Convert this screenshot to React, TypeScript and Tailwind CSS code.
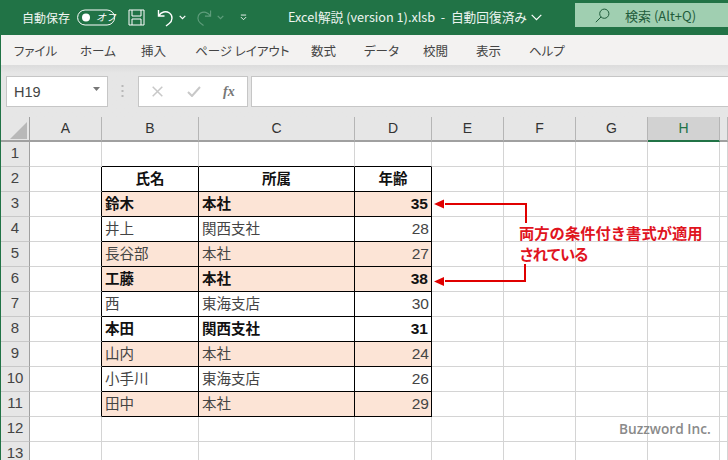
import React from "react";

const FONT = '"Noto Sans CJK JP", "Liberation Sans", sans-serif';
const CELLFONT = '"Liberation Sans", "Noto Sans CJK JP", sans-serif';
const cols = ["A", "B", "C", "D", "E", "F", "G", "H", ""];
type R = [string, string, string, boolean, boolean];
const data: Record<number, R> = {
  3: ["鈴木", "本社", "35", true, true],
  4: ["井上", "関西支社", "28", false, false],
  5: ["長谷部", "本社", "27", false, true],
  6: ["工藤", "本社", "38", true, true],
  7: ["西", "東海支店", "30", false, false],
  8: ["本田", "関西支社", "31", true, false],
  9: ["山内", "本社", "24", false, true],
  10: ["小手川", "東海支店", "26", false, false],
  11: ["田中", "本社", "29", false, true],
};
const menu: [string, string][] = [
  ["ファイル", "w-[38px] ml-[13px]"],
  ["ホーム", "w-[34px] ml-[28px]"],
  ["挿入", "w-[26px] ml-[27px]"],
  ["ページ レイアウト", "w-[86px] ml-[28px]"],
  ["数式", "w-[26px] ml-[30px]"],
  ["データ", "w-[33px] ml-[27px]"],
  ["校閲", "w-[26px] ml-[26px]"],
  ["表示", "w-[26px] ml-[27px]"],
  ["ヘルプ", "w-[33px] ml-[27px]"],
];

function Cell({ r, c }: { r: number; c: number }) {
  const inTable = r >= 2 && r <= 11 && c >= 1 && c <= 3;
  const rightBlack = r >= 2 && r <= 11 && c >= 0 && c <= 3;
  const bottomBlack = r >= 1 && r <= 11 && c >= 1 && c <= 3;
  const d = data[r];
  let text = "";
  let bold = false;
  let fill = false;
  let align = "justify-start pl-[3px]";
  let size = "text-[14.5px]";
  if (r === 2 && inTable) {
    text = ["氏名", "所属", "年齢"][c - 1];
    bold = true;
    align = "justify-center";
  } else if (d && inTable) {
    text = d[c - 1] as string;
    bold = d[3];
    fill = d[4];
    if (c === 3) {
      align = bold ? "justify-end pr-[3px]" : "justify-end pr-[2px]";
      size = "text-[15.5px]";
    }
  }
  return (
    <div
      className={`flex items-center border-r border-b ${rightBlack ? "border-r-black" : "border-r-[#d4d4d4]"} ${bottomBlack ? "border-b-black" : "border-b-[#d4d4d4]"} ${fill ? "bg-[#fce4d6]" : "bg-white"} ${align} ${bold ? "font-bold text-[#111]" : "text-[#444]"} ${size} leading-none`}
      style={{ fontFamily: CELLFONT }}
    >
      {text}
    </div>
  );
}

export default function App() {
  return (
    <div className="relative w-[728px] h-[460px] overflow-hidden bg-white" style={{ fontFamily: FONT }}>
      {/* Title bar */}
      <div className="h-[35px] bg-[#217346] flex items-center text-white text-[12px] leading-none">
        <span className="ml-[22px] w-[48px] text-[#f1f6f3]">自動保存</span>
        <svg className="ml-[7px]" width="39" height="17" viewBox="0 0 39 17" fill="none">
          <rect x="0.6" y="1" width="37" height="15" rx="7.5" stroke="#fff" strokeWidth="1" />
          <circle cx="9" cy="8.500" r="4" fill="#fff" />
        </svg>
        <span className="absolute left-[96px] top-[12px] text-[10px] italic">オフ</span>
        <svg className="ml-[12px]" width="17" height="17" viewBox="0 0 17 17" fill="none" stroke="#fff" strokeWidth="1">
          <path d="M1 1h15v15H1zM4 1v6h9V1M4 16v-6h9v6" />
        </svg>
        <svg className="ml-[12px]" width="17" height="18" viewBox="0 0 17 18" fill="none" stroke="#fff" strokeWidth="1.4">
          <path d="M1.500 1v6h6M1.700 7C4 2.500 9 1.800 12.500 4c3.500 2.500 3.200 8-.3 10.500L9 17" />
        </svg>
        <svg className="ml-[5px]" width="7" height="5" viewBox="0 0 7 5" fill="none" stroke="#fff" strokeWidth="1.2">
          <path d="M.7.8 3.500 3.600 6.300.8" />
        </svg>
        <svg className="ml-[10px]" width="16" height="18" viewBox="0 0 17 18" fill="none" stroke="#5f9d7c" strokeWidth="1.2">
          <path d="M15.500 1v6h-6M15.300 7C13 2.500 8 1.800 4.500 4 1 6.500 1.300 12 4.800 14.500L8 17" />
        </svg>
        <svg className="ml-[5px]" width="7" height="5" viewBox="0 0 7 5" fill="none" stroke="#5f9d7c" strokeWidth="1.2">
          <path d="M.7.8 3.500 3.600 6.300.8" />
        </svg>
        <svg className="ml-[16px]" width="7" height="7" viewBox="0 0 8 7" fill="none" stroke="#fff" strokeWidth="1">
          <path d="M1 .7h6M1 3 4 6l3-3" />
        </svg>
        <span className="ml-[41px] whitespace-nowrap text-[12.7px] text-[#eef5f1]">Excel解説 (version 1).xlsb&nbsp; -&nbsp; 自動回復済み</span>
        <svg className="ml-[4px]" width="11" height="7" viewBox="0 0 11 7" fill="none" stroke="#fff" strokeWidth="1.2">
          <path d="M.7.8 5.500 5.600 10.300.8" />
        </svg>
        <div className="ml-auto w-[153px] h-[24px] mb-[5px] bg-[#a0cfb1] flex items-center text-[#1f5c3b] text-[13px]">
          <svg className="ml-[20px]" width="15" height="15" viewBox="0 0 15 15" fill="none" stroke="#1f5c3b" strokeWidth="1">
            <circle cx="9.300" cy="5.700" r="4.600" />
            <path d="M6 9 .8 14.200" />
          </svg>
          <span className="ml-[15px] whitespace-nowrap">検索 (Alt+Q)</span>
        </div>
      </div>
      <div className="border-l border-l-[#217346]">
        {/* Menu */}
        <div className="h-[30px] bg-[#f3f2f1] flex items-center pt-[2px] text-[12.5px] text-[#444] leading-none">
          {menu.map(([t, cl]) => (
            <span key={t} className={`${cl} whitespace-nowrap [font-feature-settings:"palt"]`}>{t}</span>
          ))}
        </div>
        {/* Formula bar */}
        <div className="h-[52px] bg-[#e6e6e6] bg-gradient-to-b from-[#dcdcdc] to-[#e6e6e6] to-[8px] flex items-start pt-[11px] pl-[5px]">
          <div className="w-[102px] h-[31px] bg-white border border-[#c6c6c6] flex items-center justify-between pl-[7px] pr-[7px] text-[14.5px] text-[#444]" style={{ fontFamily: '"Liberation Sans", sans-serif' }}>
            <span className="pt-[3px]">H19</span>
            <svg className="mb-[5px]" width="7" height="4" viewBox="0 0 7 4"><path d="M0 0h7L3.500 4z" fill="#777" /></svg>
          </div>
          <svg className="ml-[13px] mt-[9px]" width="3" height="12" viewBox="0 0 3 12" fill="#b8b8b8">
            <rect x="0.5" y="0" width="2" height="2" />
            <rect x="0.5" y="5" width="2" height="2" />
            <rect x="0.5" y="10" width="2" height="2" />
          </svg>
          <div className="ml-[14px] w-[110px] h-[31px] bg-white border border-[#c6c6c6] flex items-center">
            <svg className="ml-[13px]" width="11" height="11" viewBox="0 0 11 11" fill="none" stroke="#c8c8c8" strokeWidth="1.5"><path d="M.7.7l9.600 9.600M10.300.7.7 10.300" /></svg>
            <svg className="ml-[24px]" width="14" height="11" viewBox="0 0 14 11" fill="none" stroke="#c8c8c8" strokeWidth="2"><path d="M1 6l4 4 8-9" /></svg>
            <span className="ml-[22px] text-[14px] italic font-bold text-[#777]" style={{ fontFamily: '"Liberation Serif", serif' }}>fx</span>
          </div>
          <div className="ml-[3px] flex-1 h-[31px] bg-white border border-[#c6c6c6] border-r-0" />
        </div>
        {/* Sheet */}
        <div className="grid grid-cols-[29px_72px_97px_156px_77px_72px_72px_72px_72px_1fr] grid-rows-[25px_repeat(13,25px)] bg-white">
          <div className="bg-[#e6e6e6] border-r border-b-2 border-r-[#a0a0a0] border-b-[#a0a0a0] relative h-[25px]">
            <svg className="absolute left-[9px] top-[5px]" width="17" height="17" viewBox="0 0 17 17"><path d="M17 0v17H0z" fill="#b8b8b8" /></svg>
          </div>
          {cols.map((c, i) => (
            <div
              key={i}
              className={`h-[25px] flex items-center justify-center text-[14px] border-r border-b-2 ${c === "H" ? "bg-[#d2d2d2] text-[#217346] border-b-[#217346] border-r-[#b5b5b5]" : "bg-[#e6e6e6] text-[#333] border-b-[#a0a0a0] border-r-[#b5b5b5]"}`}
              style={{ fontFamily: '"Liberation Sans", sans-serif' }}
            >
              {c}
            </div>
          ))}
          {Array.from({ length: 13 }, (_, ri) => ri + 1).map((r) => (
            <React.Fragment key={r}>
              <div className="bg-[#e6e6e6] border-r border-b border-r-[#a0a0a0] border-b-[#c8c8c8] flex items-center justify-center pb-px text-[15px] text-[#444]" style={{ fontFamily: '"Liberation Sans", sans-serif' }}>
                {r}
              </div>
              {cols.map((_, c) => (
                <Cell key={c} r={r} c={c} />
              ))}
            </React.Fragment>
          ))}
        </div>
      </div>
      {/* Annotation */}
      <svg className="absolute left-0 top-0 pointer-events-none" width="728" height="460" viewBox="0 0 728 460" fill="none">
        <path d="M526 223V204H445" stroke="#e00000" strokeWidth="2" />
        <path d="M434 204l10-4.500v9z" fill="#e00000" />
        <path d="M525 264V281H445" stroke="#e00000" strokeWidth="2" />
        <path d="M434 281.500l10-4.500v9z" fill="#e00000" />
      </svg>
      <div className="absolute left-[519px] top-[222px] text-[15.3px] leading-[21px] font-bold text-[#e0141e] whitespace-nowrap">
        <div>両方の条件付き書式が適用</div>
        <div className="tracking-[-1.5px]">されている</div>
      </div>
      <div className="absolute left-[619px] top-[420px] text-[13.7px] leading-[18px] font-semibold text-[#8a8a8a] whitespace-nowrap" style={{ fontFamily: '"Open Sans", sans-serif' }}>
        Buzzword Inc.
      </div>
    </div>
  );
}
